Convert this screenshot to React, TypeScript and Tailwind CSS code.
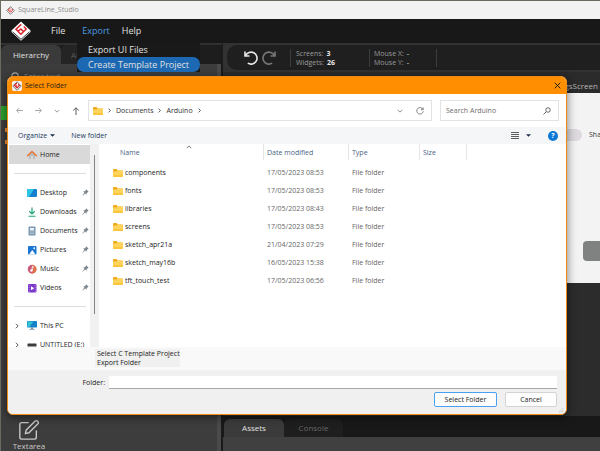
import type { ReactNode } from "react";
import { FiEdit } from "react-icons/fi";

interface PlaceProps {
  label: string;
  icon: ReactNode;
  pinned?: boolean;
  expandable?: boolean;
  active?: boolean;
}

const files = [
  { name: "components", date: "17/05/2023 08:53" },
  { name: "fonts", date: "17/05/2023 08:53" },
  { name: "libraries", date: "17/05/2023 08:43" },
  { name: "screens", date: "17/05/2023 08:53" },
  { name: "sketch_apr21a", date: "21/04/2023 07:29" },
  { name: "sketch_may16b", date: "16/05/2023 15:38" },
  { name: "tft_touch_test", date: "17/05/2023 06:56" },
];

function Logo({ className }: { className: string }) {
  return (
    <svg viewBox="0 0 20 20" className={className}>
      <path d="M10 .5 19.5 9.5v1.500L10 19.8.5 11V9.500Z" fill="#fff" />
      <path d="M1.500 10.800 10 18.300 18.500 10.800" fill="none" stroke="#222" strokeWidth=".9" />
      <path
        d="M10.200 3.400 5 8.200l2.200 2.200 2.800-2.600M12.800 5.600l2.400 2.500-5.300 5.100-2.400-2.200M9.600 7.800l2.600 2.500"
        fill="none"
        stroke="#d8262c"
        strokeWidth="1.500"
      />
    </svg>
  );
}

// Small mark for light title bars, outlined so that the diamond stays visible
function LogoMark({ className }: { className: string }) {
  return (
    <svg viewBox="0 0 20 20" className={className} fill="none">
      <path d="M10 1.500 18.500 10 10 18.500 1.500 10Z" fill="#fff" stroke="#555" strokeWidth="1.600" />
      <path d="M10 4 5 9l2.500 2.500L10.500 9M12.500 6.500 15 9l-5 5-2.500-2.500" stroke="#d8262c" strokeWidth="2.200" />
    </svg>
  );
}

function FolderIcon() {
  return (
    <svg viewBox="0 0 20 16" className="h-2 w-[10px] shrink-0">
      <path d="M0 2Q0 0 2 0h5l3 3h8q2 0 2 2v4H0Z" fill="#f0ab1c" />
      <path d="M0 6Q0 5 1 5h6l2-2h9q2 0 2 2v9q0 2-2 2H2q-2 0-2-2Z" fill="#ffd45c" />
      <path d="M0 12h20v2q0 2-2 2H2q-2 0-2-2Z" fill="#fbc63c" />
    </svg>
  );
}

function PinIcon() {
  return (
    <svg viewBox="0 0 12 12" className="size-[7px] shrink-0">
      <path d="M7.2.6 11.4 4.8 9.8 5.4 8 7.4 7.8 10 5.4 7.8 1 11.4.6 11 4.2 6.6 2 4.2 4.6 4 6.6 2.2Z" fill="#7d868c" />
    </svg>
  );
}

function Chevron({ className }: { className: string }) {
  return (
    <svg viewBox="0 0 8 8" className={className} fill="none" stroke="currentColor" strokeWidth="1.300">
      <path d="M2.500 1 5.500 4 2.500 7" />
    </svg>
  );
}

const homeIcon = (
  <svg viewBox="0 0 20 20" className="size-[10px] shrink-0">
    <path d="M4 9v9h4v-5h4v5h4V9l-6-5Z" fill="#b9bdc2" />
    <path d="M8 12h4v7H8Z" fill="#dadada" />
    <path d="M1.200 11.500 10 3l8.800 8.500" fill="none" stroke="#e8702a" strokeWidth="2.800" strokeLinecap="round" strokeLinejoin="round" />
  </svg>
);

const desktopIcon = (
  <svg viewBox="0 0 20 16" className="h-2 w-[10px] shrink-0">
    <rect width="20" height="16" rx="2" fill="#1580d0" />
    <path d="M0 2Q0 0 2 0h12L4 16H2q-2 0-2-2Z" fill="#2fc3e6" />
  </svg>
);

const downloadsIcon = (
  <svg viewBox="0 0 20 20" className="size-[10px] shrink-0" fill="none" stroke="#1fa67c" strokeWidth="2.400">
    <path d="M10 1v13M4.500 8.500 10 14l5.500-5.500M3 18.500h14" />
  </svg>
);

const documentsIcon = (
  <svg viewBox="0 0 20 20" className="size-[10px] shrink-0">
    <rect x="3" y="1" width="14" height="18" rx="1.500" fill="#7f99b3" />
    <rect x="6" y="4" width="8" height="5" fill="#eaf1f8" />
    <path d="M6 12h8M6 15h8" stroke="#c3d2e0" strokeWidth="1.400" />
  </svg>
);

const picturesIcon = (
  <svg viewBox="0 0 20 20" className="size-[10px] shrink-0">
    <rect x="2" y="2" width="17" height="17" rx="2" fill="#1976d2" />
    <path d="M4 19 10.500 10 17 19Z" fill="#fff" />
    <circle cx="14.500" cy="6.500" r="1.800" fill="#fff" />
  </svg>
);

const musicIcon = (
  <svg viewBox="0 0 20 20" className="size-[10px] shrink-0">
    <circle cx="10.500" cy="10.500" r="8.800" fill="#e0704a" />
    <path d="M2 8a9 9 0 0 0 9 11V2a9 9 0 0 0-9 6Z" fill="#c9587c" />
    <path d="M10.500 13V5l3.500 1.500" fill="none" stroke="#fff" strokeWidth="1.800" />
    <circle cx="8.800" cy="13" r="2.400" fill="#fff" />
  </svg>
);

const videosIcon = (
  <svg viewBox="0 0 20 20" className="size-[10px] shrink-0">
    <rect x="2" y="2" width="17" height="17" rx="2" fill="#7a35c9" />
    <path d="M4.500 4v14M16.500 4v14" stroke="#c9a5f2" strokeWidth="1.500" strokeDasharray="2 2" />
    <path d="m8 6.500 6.500 4L8 14.500Z" fill="#fff" />
  </svg>
);

const pcIcon = (
  <svg viewBox="0 0 20 18" className="h-[9px] w-[10px] shrink-0">
    <rect width="20" height="13" rx="1.500" fill="#1583c9" />
    <path d="M1 1h12L4 12H1Z" fill="#35c5cf" />
    <path d="M8 13h4v3h3v1.500H5V16h3Z" fill="#7c8c98" />
  </svg>
);

const driveIcon = (
  <svg viewBox="0 0 20 8" className="h-1 w-[10px] shrink-0">
    <rect x="1" y="1" width="18" height="6" rx="1" fill="#3b3b3b" />
  </svg>
);

const pinnedPlaces = [
  { label: "Desktop", icon: desktopIcon },
  { label: "Downloads", icon: downloadsIcon },
  { label: "Documents", icon: documentsIcon },
  { label: "Pictures", icon: picturesIcon },
  { label: "Music", icon: musicIcon },
  { label: "Videos", icon: videosIcon },
];

function Place({ label, icon, pinned, expandable, active }: PlaceProps) {
  return (
    <button
      className={`flex h-[19px] w-full shrink-0 items-center gap-[3px] pr-px pl-[5px] text-left whitespace-nowrap ${
        active ? "bg-[#d9d9d9]" : ""
      }`}
    >
      <span className="flex w-[10px] shrink-0 text-[#555]">
        {expandable && <Chevron className="size-[6px]" />}
      </span>
      {icon}
      <span className="flex-1">{label}</span>
      {pinned && <PinIcon />}
    </button>
  );
}

function Divider() {
  return (
    <div className="flex h-[19px] shrink-0 items-center pr-1 pl-[5px]">
      <div className="h-px w-full bg-[#dcdcdc]" />
    </div>
  );
}

function SelectFolderDialog() {
  return (
    <div
      role="dialog"
      aria-label="Select Folder"
      className="absolute top-[75px] right-[33px] left-[6px] flex flex-col overflow-hidden rounded-[6px] border border-[#f08c14] bg-white font-['Open_Sans',sans-serif] text-[7px] leading-[10px] text-[#1c1c1c] shadow-[0_2px_10px_rgba(0,0,0,0.5)]"
    >
      <div className="flex h-[17px] items-center bg-[#ff8f00] pr-[5px] pl-1">
        <span className="flex rounded-[2px] bg-[#f4f4f4]">
          <LogoMark className="size-[10px]" />
        </span>
        <span className="flex-1 pl-[3px]">Select Folder</span>
        <button aria-label="Close">
          <svg viewBox="0 0 10 10" className="size-[7px]" stroke="#222" strokeWidth="1.400">
            <path d="m1 1 8 8M9 1 1 9" />
          </svg>
        </button>
      </div>

      {/* Navigation */}
      <div className="flex h-[33px] items-center gap-2 pr-[7px] pl-2">
        <div className="flex w-16 items-center justify-between text-[#9a9a9a]">
          <button aria-label="Back">
            <svg viewBox="0 0 10 10" className="size-[7px]" fill="none" stroke="currentColor" strokeWidth="1.200">
              <path d="M10 5H1M4.500 1.500 1 5l3.500 3.500" />
            </svg>
          </button>
          <button aria-label="Forward">
            <svg viewBox="0 0 10 10" className="size-[7px]" fill="none" stroke="currentColor" strokeWidth="1.200">
              <path d="M0 5h9M5.500 1.500 9 5 5.500 8.500" />
            </svg>
          </button>
          <button aria-label="Recent locations">
            <Chevron className="size-[6px] rotate-90" />
          </button>
          <button aria-label="Up" className="text-[#555]">
            <svg viewBox="0 0 10 10" className="size-2" fill="none" stroke="currentColor" strokeWidth="1.200">
              <path d="M5 10V1M1.500 4.500 5 1l3.500 3.500" />
            </svg>
          </button>
        </div>
        <div className="flex h-[21px] flex-1 items-center gap-1 border border-[#e3e3e3] px-1 text-[#333]">
          <FolderIcon />
          <Chevron className="size-[5px]" />
          <button>Documents</button>
          <Chevron className="size-[5px]" />
          <button>Arduino</button>
          <Chevron className="size-[5px]" />
          <span className="flex-1" />
          <button aria-label="Previous locations" className="mr-[9px] text-[#888]">
            <Chevron className="size-[6px] rotate-90" />
          </button>
          <button aria-label="Refresh" className="mr-[3px] text-[#666]">
            <svg viewBox="0 0 16 16" className="size-2" fill="none" stroke="currentColor" strokeWidth="1.600">
              <path d="M14 5A6.500 6.500 0 1 0 14.500 8.500M14.300 1v4.300H10" />
            </svg>
          </button>
        </div>
        <label className="flex h-[21px] w-[119px] items-center border border-[#e3e3e3] pr-[7px] pl-[5px]">
          <input
            aria-label="Search Arduino"
            placeholder="Search Arduino"
            className="w-full min-w-0 flex-1 bg-transparent outline-none placeholder:text-[#6d6d6d]"
          />
          <svg viewBox="0 0 16 16" className="size-2 shrink-0" fill="none" stroke="#444" strokeWidth="1.600">
            <circle cx="10" cy="6" r="4.500" />
            <path d="M6.500 9.500 1 15" />
          </svg>
        </label>
      </div>

      {/* Command bar */}
      <div className="flex h-[17px] items-center bg-[#f5f6f8] pr-2 pl-[10px] text-[#24395e]">
        <button className="flex items-center gap-[3px]">
          Organize
          <svg viewBox="0 0 8 4" className="h-[3px] w-[5px]">
            <path d="M0 0h8L4 4Z" fill="#1b2b4b" />
          </svg>
        </button>
        <button className="ml-4">New folder</button>
        <span className="flex-1" />
        <button aria-label="Change view" className="flex items-center gap-[7px]">
          <svg viewBox="0 0 8 8" className="size-2" stroke="#606060" strokeWidth="1">
            <path d="M0 .5h8M0 2.500h8M0 4.500h8M0 6.500h8" />
          </svg>
          <svg viewBox="0 0 8 4" className="h-[3px] w-[5px]">
            <path d="M0 0h8L4 4Z" fill="#1b2b4b" />
          </svg>
        </button>
        <button
          aria-label="Help"
          className="ml-[17px] flex size-[10px] items-center justify-center rounded-full bg-[#0a78d4] font-bold text-white"
        >
          ?
        </button>
      </div>

      <div className="flex h-[203px] overflow-hidden">
        <nav aria-label="Places" className="flex w-[82px] shrink-0 flex-col overflow-hidden pt-px pl-px">
          <Place label="Home" icon={homeIcon} active />
          <Divider />
          {pinnedPlaces.map((place) => (
            <Place key={place.label} {...place} pinned />
          ))}
          <Divider />
          <Place label="This PC" icon={pcIcon} expandable />
          <Place label="UNTITLED (E:)" icon={driveIcon} expandable />
        </nav>
        <div className="flex w-[9px] shrink-0 justify-center bg-[#f1f1f1] pt-[11px]">
          <div className="h-[159px] w-px bg-[#858585]" />
        </div>
        <table className="w-full table-fixed self-start text-left">
          <thead className="text-[#4a5f85]">
            <tr className="h-5 align-top">
              <th className="w-[165px] p-0 font-normal">
                <div className="relative h-4 border-r border-[#e5e5e5] pt-1 pl-[21px]">
                  Name
                  <Chevron className="absolute top-0 right-[71px] size-[6px] -rotate-90 text-[#777]" />
                </div>
              </th>
              <th className="w-[85px] p-0 font-normal">
                <div className="h-4 border-r border-[#e5e5e5] pt-1 pl-[3px]">Date modified</div>
              </th>
              <th className="w-[71px] p-0 font-normal">
                <div className="h-4 border-r border-[#e5e5e5] pt-1 pl-[3px]">Type</div>
              </th>
              <th className="p-0 font-normal">
                <div className="h-4 w-[47px] border-r border-[#e5e5e5] pt-1 pl-[3px]">Size</div>
              </th>
            </tr>
          </thead>
          <tbody>
            {files.map((file) => (
              <tr key={file.name} className="h-[18px] text-[#666]">
                <td className="p-0">
                  <div className="flex items-center gap-[2px] pl-[14px] text-[#1c1c1c]">
                    <FolderIcon />
                    {file.name}
                  </div>
                </td>
                <td className="py-0 pr-0 pl-[3px]">{file.date}</td>
                <td className="py-0 pr-0 pl-[3px]">File folder</td>
                <td className="p-0" />
              </tr>
            ))}
          </tbody>
        </table>
      </div>

      <div className="flex h-[23px] bg-[#f9f9f9] pt-[2px] pl-[87px]">
        <p className="h-[18px] bg-[#f0f0f0] pl-[2px] leading-[9px] whitespace-nowrap">
          Select C Template Project
          <br />
          Export Folder
        </p>
      </div>

      <div className="flex flex-col gap-[3px] bg-[#f0f0f0] pt-[6px] pr-[9px] pb-[7px]">
        <div className="flex items-center">
          <label htmlFor="folder" className="w-[101px] pr-1 text-right">
            Folder:
          </label>
          <input id="folder" className="h-[13px] min-w-0 flex-1 border-b border-[#a8a8a8] bg-white px-1 outline-none" />
        </div>
        <div className="flex justify-end gap-2">
          <button className="h-[15px] w-[63px] rounded-[2px] border border-[#4aa0f0] bg-[#fdfdfd]">Select Folder</button>
          <button className="h-[15px] w-[52px] rounded-[2px] border border-[#d3d3d3] bg-[#fdfdfd]">Cancel</button>
        </div>
      </div>
      <svg viewBox="0 0 6 6" className="absolute right-[2px] bottom-px size-[5px]" fill="#b5b5b5">
        <path d="M4 0h1v1H4zM2 2h1v1H2zM4 2h1v1H4zM0 4h1v1H0zM2 4h1v1H2zM4 4h1v1H4z" />
      </svg>
    </div>
  );
}

function MenuBar() {
  return (
    <nav className="relative flex h-6 shrink-0 items-center bg-[#181818] pl-[10px] text-[9px] text-[#e0e0e0]">
      <Logo className="size-5" />
      <button className="ml-5">File</button>
      <button className="ml-[17px] text-[#4a9be0]">Export</button>
      <button className="ml-3">Help</button>
      <div className="absolute top-6 left-[76px] z-10 flex flex-col bg-[#191919]">
        <button className="h-[14px] px-[11px] text-left">Export UI Files</button>
        <button className="h-[15px] rounded-[7px] bg-[#1c68b2] px-[11px] text-left whitespace-nowrap">
          Create Template Project
        </button>
      </div>
    </nav>
  );
}

function LeftPanel() {
  return (
    <aside className="flex w-[222px] shrink-0 flex-col border-t-2 border-r-2 border-t-[#303030] border-r-[#1a1a1a] bg-[#1d1d1d]">
      <div className="flex h-[19px] shrink-0 items-stretch">
        <button className="w-[60px] rounded-t-[6px] bg-[#3a3a3a] text-[#e0e0e0]">Hierarchy</button>
        <button className="w-16 rounded-t-[6px] bg-[#242424] pl-[10px] text-left text-[#5a5a5a]">An</button>
      </div>
      <div className="flex flex-1 flex-col overflow-hidden border-r-4 border-[#4a4a4a] bg-[#3d3d3d]">
        <div className="flex h-6 shrink-0 items-center gap-1 pl-[10px]">
          <svg viewBox="0 0 10 10" className="size-[9px]" fill="none" stroke="#aaa" strokeWidth="1.200">
            <circle cx="4.500" cy="4.500" r="3.500" />
            <path d="m7 7 3 3" />
          </svg>
          <input
            aria-label="Filter"
            placeholder="Enter text"
            className="w-24 bg-transparent outline-none placeholder:text-[#8a8a8a]"
          />
        </div>
        <div className="mt-[18px] flex shrink-0 flex-col gap-2">
          <div className="h-[14px] w-3 bg-[#2ca02c]" />
          <div className="ml-1 h-1 w-2 bg-[#e8913a]" />
          <div className="ml-1 h-1 w-2 bg-[#e8913a]" />
        </div>
        <div className="flex-1" />
        <button className="flex h-8 w-[56px] shrink-0 flex-col items-center overflow-hidden text-[#c9c9c9]">
          <FiEdit className="size-[22px] shrink-0" strokeWidth={1.5} />
          <span className="leading-[10px]">Textarea</span>
        </button>
      </div>
    </aside>
  );
}

function Workspace() {
  return (
    <main className="flex min-w-0 flex-1 flex-col bg-[#2c2c2c]">
      <div className="flex h-[29px] shrink-0 items-center bg-[#323232] pl-1">
        <div className="flex h-[25px] flex-1 items-center rounded-l-[10px] bg-[#1f1f1f] pl-4 text-[#9a9a9a]">
          <button aria-label="Undo" className="text-[#e8e8e8]">
            <svg viewBox="0 0 16 16" className="size-4" fill="none" stroke="currentColor" strokeWidth="1.600">
              <path d="M2 1.500v4.500h4.500M2.600 5.600A6 6 0 1 1 4.800 13.200" />
            </svg>
          </button>
          <button aria-label="Redo" className="ml-[2px] text-[#777]">
            <svg viewBox="0 0 16 16" className="size-4" fill="none" stroke="currentColor" strokeWidth="1.600">
              <path d="M14 1.500v4.500H9.500M13.400 5.600A6 6 0 1 0 11.200 13.200" />
            </svg>
          </button>
          <dl className="ml-[13px] w-[79px] border-l border-[#3c3c3c] pl-[5px] text-[7px] leading-[9px]">
            <div className="flex gap-[3px]">
              <dt>Screens:</dt>
              <dd className="font-bold text-[#e8e8e8]">3</dd>
            </div>
            <div className="flex gap-[3px]">
              <dt>Widgets:</dt>
              <dd className="font-bold text-[#e8e8e8]">26</dd>
            </div>
          </dl>
          <dl className="w-[68px] border-x border-[#3c3c3c] pl-1 text-[7px] leading-[9px]">
            <div className="flex gap-[3px]">
              <dt>Mouse X:</dt>
              <dd className="font-bold">-</dd>
            </div>
            <div className="flex gap-[3px]">
              <dt>Mouse Y:</dt>
              <dd className="font-bold">-</dd>
            </div>
          </dl>
        </div>
      </div>
      <div className="flex h-[21px] shrink-0 items-center justify-end bg-[#2b2b2b] pt-[6px] pr-[2px] text-[#b5b5b5]">
        SettingsScreen
      </div>
      <div className="flex h-[190px] shrink-0 flex-col items-end bg-[#f3f3f3] pt-9">
        <div className="flex items-center gap-[7px]">
          <div className="h-3 w-6 rounded-full bg-[#dedadf]" />
          <span className="w-[11px] overflow-hidden text-[7px] whitespace-nowrap text-[#333]">Sha</span>
        </div>
        <div className="mt-[100px] h-5 w-[17px] rounded-l-[4px] bg-[#808281]" />
      </div>
      <div className="flex-1" />
      <div className="flex h-[21px] shrink-0 items-end bg-[#181818] pl-px">
        <button className="h-[18px] w-[60px] rounded-t-[6px] bg-[#3b3b3b] text-[#e0e0e0]">Assets</button>
        <button className="h-[18px] w-[59px] rounded-t-[6px] bg-[#1e1e1e] text-[#666]">Console</button>
      </div>
      <div className="h-[14px] shrink-0 bg-[#404040]" />
    </main>
  );
}

export default function App() {
  return (
    <div className="relative flex h-screen flex-col overflow-hidden border-t border-l border-[#6b6a5e] bg-[#181818] font-['Open_Sans',sans-serif] text-[8px] leading-[12px]">
      <header className="flex h-[18px] shrink-0 items-center gap-[3px] bg-[#f2f2f2] pl-[5px] text-[7px] text-[#8c8c8c]">
        <LogoMark className="size-[9px]" />
        SquareLine_Studio
      </header>
      <MenuBar />
      <div className="flex min-h-0 flex-1">
        <LeftPanel />
        <Workspace />
      </div>
      <SelectFolderDialog />
    </div>
  );
}
